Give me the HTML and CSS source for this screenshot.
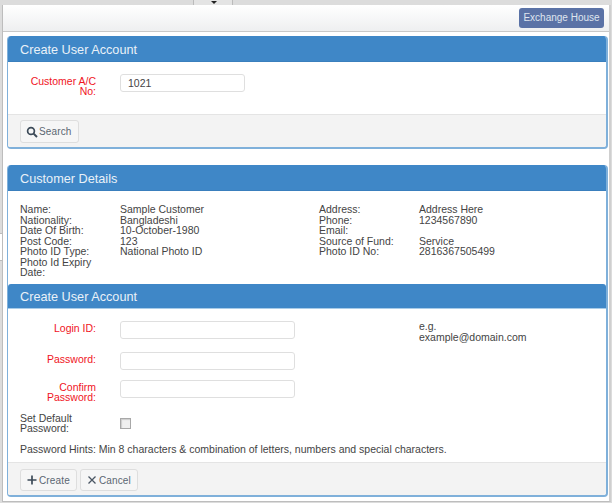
FILE: index.html
```html
<!DOCTYPE html>
<html lang="en">

<head>
    <meta charset="UTF-8">
    <title>Create User Account</title>
    <link rel="stylesheet" href="styles.css">
</head>

<body>
    <div class="back-tab"><span class="back-arrow"></span></div>
    <div class="back-edge"></div>

    <div class="modal">
        <div class="modal-top">
            <a class="house-btn">Exchange House</a>
        </div>

        <div class="modal-body">
            <div class="panel">
                <div class="panel-head">Create User Account</div>
                <div class="panel-body search-body">
                    <div class="form-row">
                        <label class="req">Customer A/C No:</label>
                        <input type="text" class="field short" value="1021">
                    </div>
                </div>
                <div class="panel-foot">
                    <button class="btn">
                        <svg viewBox="0 0 12 12" width="12" height="12"><circle cx="5" cy="5" r="3.4" fill="none" stroke="#3c4a58" stroke-width="1.7"/><path d="M7.6 7.6L11 11" stroke="#3c4a58" stroke-width="2"/></svg>
                        Search
                    </button>
                </div>
            </div>

            <div class="panel panel-joined">
                <div class="panel-head">Customer Details</div>
                <div class="details">
                    <div class="detail-col">
                        <div class="detail"><span>Name:</span><span>Sample Customer</span></div>
                        <div class="detail"><span>Nationality:</span><span>Bangladeshi</span></div>
                        <div class="detail"><span>Date Of Birth:</span><span>10-October-1980</span></div>
                        <div class="detail"><span>Post Code:</span><span>123</span></div>
                        <div class="detail"><span>Photo ID Type:</span><span>National Photo ID</span></div>
                        <div class="detail"><span>Photo Id Expiry Date:</span><span></span></div>
                    </div>
                    <div class="detail-col">
                        <div class="detail"><span>Address:</span><span>Address Here</span></div>
                        <div class="detail"><span>Phone:</span><span>1234567890</span></div>
                        <div class="detail"><span>Email:</span><span></span></div>
                        <div class="detail"><span>Source of Fund:</span><span>Service</span></div>
                        <div class="detail"><span>Photo ID No:</span><span>2816367505499</span></div>
                    </div>
                </div>

                <div class="panel-head sub-head">Create User Account</div>
                <div class="panel-body account-body">
                    <div class="form-row">
                        <label class="req">Login ID:</label>
                        <input type="text" class="field">
                        <div class="field-note">e.g. example@domain.com</div>
                    </div>
                    <div class="form-row">
                        <label class="req">Password:</label>
                        <input type="text" class="field">
                    </div>
                    <div class="form-row">
                        <label class="req">Confirm Password:</label>
                        <input type="text" class="field">
                    </div>
                    <div class="form-row check-row">
                        <label class="plain">Set Default Password:</label>
                        <span class="check"></span>
                    </div>
                    <p class="hints">Password Hints: Min 8 characters &amp; combination of letters, numbers and special characters.</p>
                </div>
                <div class="panel-foot">
                    <button class="btn">
                        <svg viewBox="0 0 12 12" width="12" height="12"><path d="M6 1.5V10.5M1.5 6H10.5" stroke="#3c4a58" stroke-width="1.7"/></svg>
                        Create
                    </button>
                    <button class="btn">
                        <svg viewBox="0 0 12 12" width="12" height="12"><path d="M2.5 2.5L9.5 9.5M9.5 2.5L2.5 9.5" stroke="#4a5663" stroke-width="1.3"/></svg>
                        Cancel
                    </button>
                </div>
            </div>
        </div>
    </div>
</body>

</html>
```

FILE: styles.css
```css
* {
    box-sizing: border-box;
}

html,
body {
    height: 503px;
    overflow: hidden;
}

body {
    margin: 0;
    padding: 5px 1px 0 2px;
    background-color: #dcdcdc;
    font-family: "Liberation Sans", Arial, sans-serif;
    font-size: 10.5px;
    color: #444;
    position: relative;
}

.back-tab {
    position: absolute;
    top: 0;
    left: 193px;
    width: 40px;
    height: 5px;
    background: #e4e4e4;
    border-left: 1px solid #bbb;
    border-right: 1px solid #bbb;
}

.back-arrow {
    position: absolute;
    left: 17px;
    top: 1px;
    border: 3px solid transparent;
    border-top-color: #222;
}

.back-edge {
    position: absolute;
    left: 0;
    top: 233px;
    width: 2px;
    height: 28px;
    background: #fff;
    border-top: 1px solid #bbb;
    border-bottom: 1px solid #bbb;
}

.modal {
    height: 497px;
    background: #fff;
    border-left: 1px solid #bdbdbd;
    border-right: 2px solid #cfcfcf;
    border-bottom: 1px solid #bdbdbd;
}

.modal-top {
    height: 27px;
    padding: 3px 5px 0 0;
    display: flex;
    justify-content: flex-end;
    background: linear-gradient(#fff, #eeeff0);
    border-bottom: 1px solid #c8c8c8;
}

.house-btn {
    width: 85px;
    height: 20px;
    line-height: 20px;
    text-align: center;
    font-size: 10px;
    color: #dfe5ef;
    background: #5a72a6;
    border-radius: 3px;
}

.modal-body {
    padding: 4px 1px 0 4px;
}

.panel {
    background: #fff;
    border: 1px solid #7fb0da;
    border-width: 0 2px 2px 1px;
    border-radius: 4px;
    overflow: hidden;
    margin-bottom: 16px;
}

.panel-head {
    height: 26px;
    padding-left: 12px;
    line-height: 28px;
    font-size: 12.7px;
    color: #e9f1f8;
    background: #3f87c7;
    border-bottom: 1px solid #3a7fbd;
}

.sub-head {
    height: 25px;
    line-height: 27px;
    border-radius: 3px 3px 0 0;
    border-bottom: 1px solid #a9cce8;
}

.panel-body {
    padding: 0 12px;
}

.search-body {
    height: 52px;
    padding-top: 12px;
}

.account-body {
    height: 153px;
    padding-top: 12px;
}

.panel-foot {
    height: 33px;
    padding: 5px 12px;
    display: flex;
    gap: 3px;
    background: #f3f3f3;
    border-top: 1px solid #e4e4e4;
}

.panel-joined .panel-foot {
    padding-top: 6px;
}

.btn {
    height: 23px;
    padding: 0 6px 0 5px;
    display: flex;
    align-items: center;
    gap: 1px;
    font-family: inherit;
    font-size: 10px;
    letter-spacing: 0.15px;
    color: #5b6672;
    background: #f6f6f6;
    border: 1px solid #dedede;
    border-radius: 3px;
}

.panel-joined .btn {
    height: 22px;
}

.form-row {
    display: flex;
    align-items: flex-start;
    margin-bottom: 10px;
    line-height: 10.5px;
}

.form-row label {
    width: 76px;
    margin-right: 24px;
    flex: none;
    padding-top: 1.5px;
    text-align: right;
}

.req {
    color: #f0141e;
}

.form-row label.plain {
    text-align: left;
    color: #444;
    padding-top: 0;
}

.field {
    width: 175px;
    height: 18px;
    padding: 0 7px;
    font-family: inherit;
    font-size: 10.5px;
    color: #444;
    background: #fff;
    border: 1px solid #dfdfdf;
    border-radius: 3px;
    outline: none;
}

.short {
    width: 125px;
}

.field-note {
    width: 120px;
    margin-left: 124px;
}

.check-row {
    align-items: center;
    margin-bottom: 0;
}

.check {
    width: 11px;
    height: 11px;
    background: #efefef;
    border: 1px solid #a8a8a8;
    box-shadow: inset 1px 1px 1px #ccc;
}

.hints {
    margin: 9.5px 0 0;
    line-height: 12px;
}

.details {
    height: 93px;
    padding: 13px 12px 0;
    display: flex;
    line-height: 10.5px;
}

.detail-col {
    width: 299px;
    flex: none;
}

.detail {
    display: flex;
}

.detail span:first-child {
    width: 100px;
    padding-right: 24px;
    flex: none;
}
```
